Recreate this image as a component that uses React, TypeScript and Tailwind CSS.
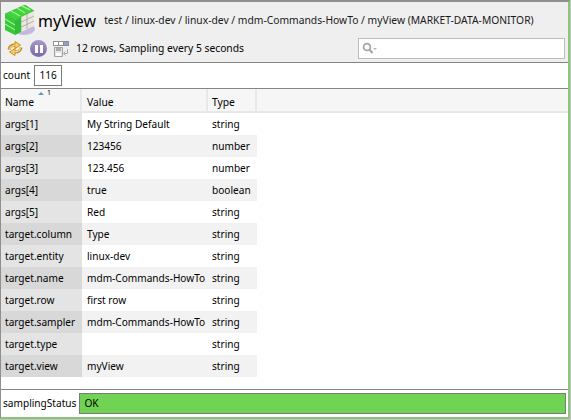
import React from 'react';

const rows = [
  ['args[1]', 'My String Default', 'string'],
  ['args[2]', '123456', 'number'],
  ['args[3]', '123.456', 'number'],
  ['args[4]', 'true', 'boolean'],
  ['args[5]', 'Red', 'string'],
  ['target.column', 'Type', 'string'],
  ['target.entity', 'linux-dev', 'string'],
  ['target.name', 'mdm-Commands-HowTo', 'string'],
  ['target.row', 'first row', 'string'],
  ['target.sampler', 'mdm-Commands-HowTo', 'string'],
  ['target.type', '', 'string'],
  ['target.view', 'myView', 'string'],
];

const ViewIcon = () => (
  <svg width="32" height="32" viewBox="0 0 32 32" className="shrink-0">
    <ellipse cx="20" cy="24" rx="11" ry="6" fill="#c4b7de" />
    {/* top face */}
    <path d="M1 9 L21 0 L30 6 L11 15 Z" fill="#3fd43c" stroke="#2aa62a" strokeWidth="0.6" />
    <path d="M7 6 L16 11 M13 3 L21 8 M18 1 L26 5" stroke="#9bf08a" strokeWidth="1.4" />
    {/* left face */}
    <path d="M1 9 L11 15 L11 30 L1 25 Z" fill="#35c83a" />
    <path d="M1 14 L11 20 M1 19 L11 25" stroke="#a5ee94" strokeWidth="1.2" />
    {/* right face */}
    <path d="M11 15 L30 6 L30 21 L11 30 Z" fill="#e8e8e0" />
    <path d="M11 20 L30 11 M11 25 L30 16 M17 12 L17 27 M23 9 L23 24" stroke="#a3a398" strokeWidth="0.8" />
    <path d="M11 15 L17 12 L17 27 L11 30 Z" fill="#2fbd35" />
  </svg>
);

const RefreshIcon = () => (
  <svg width="16" height="17" viewBox="0 0 16 17" fill="none">
    <path d="M2 9.5 C2.5 6.5 5 5 8 5" stroke="#c58a1e" strokeWidth="3" />
    <path d="M14 7.5 C13.5 10.5 11 12 8 12" stroke="#c58a1e" strokeWidth="3" />
    <path d="M8 1.5 L13.5 5 L8 8.5 Z" fill="#f7cf63" stroke="#c58a1e" strokeWidth="0.9" />
    <path d="M8 8.5 L2.5 12 L8 15.5 Z" fill="#f7cf63" stroke="#c58a1e" strokeWidth="0.9" />
    <path d="M2.6 9 C3.2 6.8 5.4 5.4 8.6 5" stroke="#fbdc84" strokeWidth="1.2" />
    <path d="M13.4 8 C12.8 10.2 10.6 11.6 7.4 12" stroke="#fbdc84" strokeWidth="1.2" />
  </svg>
);

const PauseIcon = () => (
  <div className="w-[17px] h-[17px] rounded-full bg-gradient-to-b from-[#a79ac9] to-[#7a68ac] flex items-center justify-center gap-[2px]">
    <div className="w-[3px] h-[8px] bg-white" />
    <div className="w-[3px] h-[8px] bg-white" />
  </div>
);

const ColumnsIcon = () => (
  <svg width="16" height="16" viewBox="0 0 16 16" fill="none">
    <rect x="0.5" y="0.5" width="15" height="4" fill="#fff" stroke="#8f8f8f" />
    <rect x="11" y="1" width="4" height="3" fill="#8d9fd0" />
    <path d="M5.5 1V4M10.5 1V4" stroke="#8f8f8f" />
    <path d="M1.5 6.5H9.5V15.5H1.5Z" fill="#e4e4e4" stroke="#a0a0a0" />
    <rect x="3" y="7" width="5" height="3" fill="#aaaaaa" />
    <rect x="3" y="12" width="5" height="3" fill="#fafafa" />
    <path d="M14.5 8V12.5H11M12.5 10.5L10.5 12.5L12.5 14.5" stroke="#a8a8a8" />
  </svg>
);

const SearchIcon = () => (
  <svg width="16" height="13" viewBox="0 0 16 13" fill="none">
    <circle cx="5" cy="5" r="3.4" stroke="#a3a3a3" strokeWidth="1.7" />
    <path d="M7.5 7.5L10.5 11" stroke="#a3a3a3" strokeWidth="2" />
    <path d="M11 6H15L13 8Z" fill="#b5b5b5" />
  </svg>
);

export default function App() {
  return (
    <div className="w-[571px] h-[420px] border-r border-b border-[#c4c4c4] font-['Noto_Sans',sans-serif] text-[10.3px] text-black overflow-hidden">
      <div className="h-full flex flex-col bg-white border-l border-l-[#8f8f8f] border-t-2 border-t-[#8f8f8f] border-r-2 border-r-[#8cc47a] border-b-2 border-b-[#8cc47a]">
        {/* Header */}
        <div className="h-[61px] shrink-0 flex flex-col bg-[#efefef] border-b border-[#858585] pl-[3px] pr-[3px]">
          <div className="flex items-center h-[36px] pt-[2px]">
            <ViewIcon />
            <span className="ml-[2px] text-[16px] leading-none">myView</span>
            <span className="ml-[8px] whitespace-nowrap text-[#1a1a1a]">test / linux-dev / linux-dev / mdm-Commands-HowTo / myView (MARKET-DATA-MONITOR)</span>
          </div>
          <div className="flex items-center h-[21px] pl-[3px]">
            <RefreshIcon />
            <div className="ml-[7px]"><PauseIcon /></div>
            <div className="ml-[6px]"><ColumnsIcon /></div>
            <span className="ml-[7px]">12 rows, Sampling every 5 seconds</span>
            <div className="ml-auto w-[207px] h-[21px] bg-white border border-[#bdbdbd] flex items-center pl-[3px]">
              <SearchIcon />
            </div>
          </div>
        </div>

        {/* Count */}
        <div className="h-[26px] shrink-0 flex items-center pl-[2px] border-b border-[#858585] text-[10.1px]">
          <span>count</span>
          <div className="ml-[4px] w-[28px] h-[21px] border border-[#7a7a7a] flex items-center justify-center">116</div>
        </div>

        {/* Table head */}
        <div className="h-[24px] shrink-0 flex bg-[#f6f6f6] border-b-2 border-[#e8e8e8]">
          <div className="relative w-[81px] border-r-2 border-[#e8e8e8] pl-[4px] pt-[6px]">
            Name
            <span className="absolute left-[37px] top-0 flex items-center gap-[3px] text-[7px] leading-[8px]">
              <span className="w-0 h-0 border-l-[3px] border-r-[3px] border-b-[3px] border-l-transparent border-r-transparent border-b-[#6f8fb5]" />
              1
            </span>
          </div>
          <div className="w-[126px] border-r-2 border-[#e8e8e8] pl-[5px] pt-[6px]">Value</div>
          <div className="w-[49px] border-r-2 border-[#e8e8e8] pl-[4px] pt-[6px]">Type</div>
        </div>

        {/* Rows */}
        <div className="flex-1 min-h-0 flex flex-col text-[10.1px]">
          {rows.map((row, i) => (
            <div key={row[0]} className={`h-[22px] w-[256px] shrink-0 flex items-center whitespace-nowrap ${i % 2 ? 'bg-[#f2f2f2]' : 'bg-white'}`}>
              <div className={`w-[81px] h-full shrink-0 flex items-center pl-[4px] pt-[2px] ${i % 2 ? 'bg-[#d8d8d8]' : 'bg-[#e4e4e4]'}`}>{row[0]}</div>
              <div className="w-[126px] shrink-0 pl-[5px] pt-[2px]">{row[1]}</div>
              <div className="w-[49px] shrink-0 pl-[4px] pt-[2px]">{row[2]}</div>
            </div>
          ))}
        </div>

        {/* Status */}
        <div className="h-[28px] shrink-0 flex items-center pl-[2px] pr-[2px] border-t border-[#858585] text-[10.1px]">
          <span>samplingStatus</span>
          <div className="ml-[3px] flex-1 h-[21px] bg-[#70d353] border border-[#7a7a7a] flex items-center pl-[4px]">OK</div>
        </div>
      </div>
    </div>
  );
}
